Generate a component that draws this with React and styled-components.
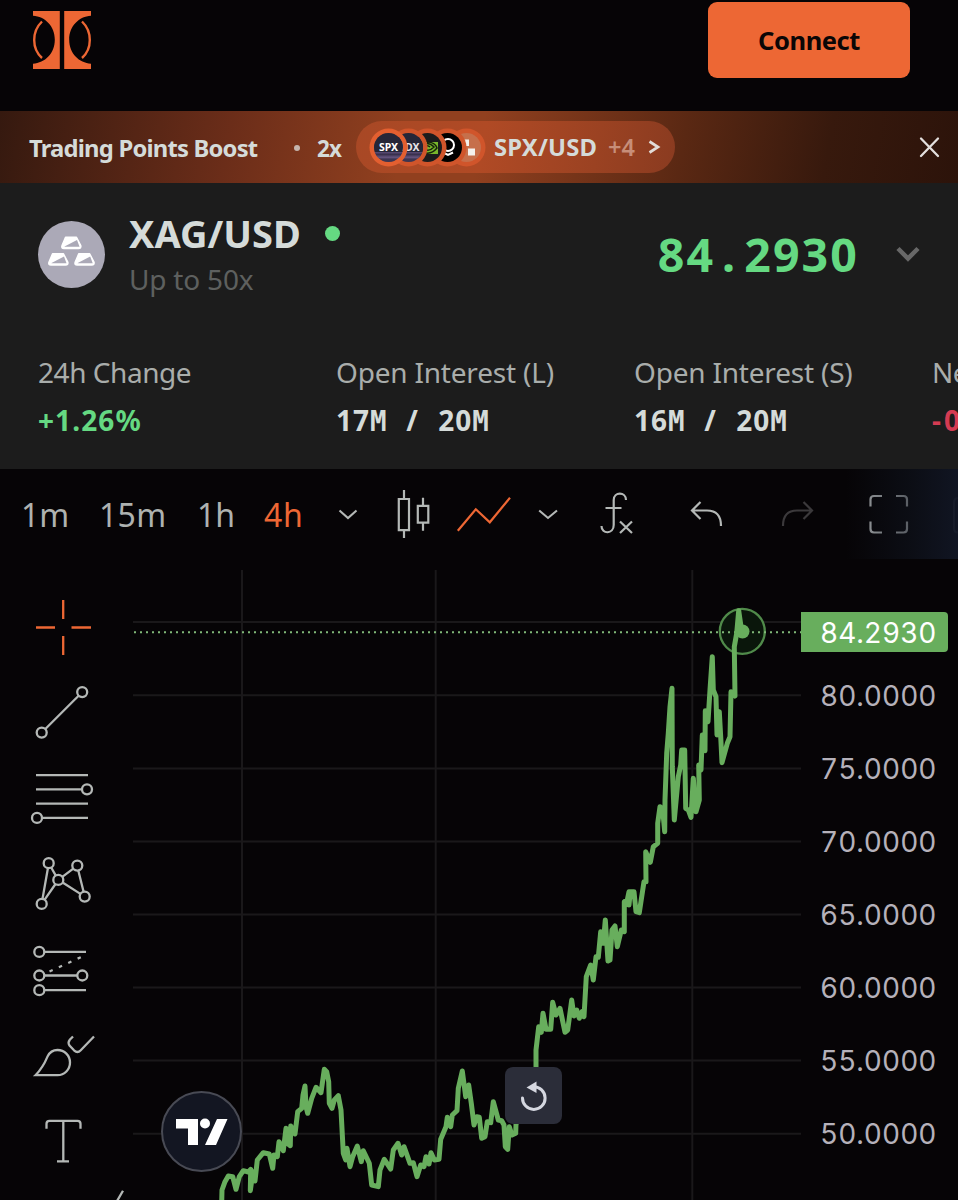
import React from "react";
import styled, { createGlobalStyle } from "styled-components";

const Global = createGlobalStyle`
  * { box-sizing: border-box; }
  body { margin: 0; background: #060406; overflow: hidden; }
`;

const SANS = `"Noto Sans", "Open Sans", sans-serif`;

const Page = styled.div`
  width: 958px;
  height: 1200px;
  overflow: hidden;
  background: #060406;
  font-family: ${SANS};
  color: #d5dbd9;
  display: flex;
  flex-direction: column;
`;

const Text = styled.span`
  font-size: ${(p) => p.$size}px;
  font-weight: ${(p) => p.$weight || 400};
  letter-spacing: ${(p) => p.$track || 0}px;
  color: ${(p) => p.$color || "inherit"};
  line-height: ${(p) => p.$line || 1.2};
  font-family: ${(p) => p.$font || "inherit"};
  white-space: pre;
`;

/* Header */
const Header = styled.header`
  height: 111px;
  flex: none;
  display: flex;
  justify-content: space-between;
  align-items: flex-start;
  padding: 2px 48px 0 33px;
`;
const Logo = styled.svg`
  margin-top: 9px;
  width: 58px;
  height: 58px;
`;
const ConnectButton = styled.button`
  width: 202px;
  height: 76px;
  border: 0;
  border-radius: 9px;
  background: #ed6734;
  color: #0b0606;
  font-family: inherit;
  padding: 0;
`;

/* Promo banner */
const Banner = styled.div`
  height: 72px;
  flex: none;
  display: flex;
  align-items: center;
  padding: 2px 18px 0 29px;
  background: linear-gradient(100deg, #35190f 0%, #6b2d19 24%, #91401f 42%, #91401f 50%, #5a2813 71%, #37190d 86%, #2c130a 100%);
`;
const BannerTitle = styled.div`
  width: 265px;
`;
const Bullet = styled.div`
  width: 6px;
  height: 6px;
  border-radius: 50%;
  background: #c5b5ad;
  margin-right: 17px;
`;
const Multiplier = styled.div`
  width: 39px;
`;
const Pill = styled.div`
  width: 319px;
  height: 52px;
  margin-top: -2px;
  border-radius: 26px;
  display: flex;
  align-items: center;
  padding-left: 18px;
  background: linear-gradient(100deg, #a84825 0%, #b04a25 40%, #9b4222 75%, #8a3b20 100%);
`;
const Coins = styled.div`
  display: flex;
  width: 120px;
  isolation: isolate;
`;
const Coin = styled.div`
  width: 29px;
  height: 29px;
  flex: none;
  margin-right: -9.5px;
  border-radius: 50%;
  position: relative;
  z-index: ${(p) => p.$z};
  background: ${(p) => p.$bg};
  box-shadow: 0 0 0 4.5px ${(p) => p.$ring || "#d0552b"};
  display: flex;
  align-items: center;
  justify-content: center;
  overflow: hidden;
`;
const CoinArt = styled.svg`
  width: 29px;
  height: 29px;
  flex: none;
`;
const PairName = styled.div`
  width: 114px;
`;
const Extra = styled.div`
  width: 39px;
`;
const Spacer = styled.div`
  flex: 1;
`;
const Glyph = styled.svg`
  width: ${(p) => p.$w}px;
  height: ${(p) => p.$h}px;
  flex: none;
  fill: none;
  display: block;
`;

/* Instrument panel */
const Instrument = styled.section`
  height: 286px;
  flex: none;
  background: #1c1c1c;
`;
const InstrumentRow = styled.div`
  height: 144px;
  display: flex;
  padding: 0 37px 0 38px;
`;
const Silver = styled.svg`
  width: 67px;
  height: 67px;
  margin-top: 38px;
  flex: none;
`;
const Names = styled.div`
  margin: 28px 0 0 24px;
  display: flex;
  flex-direction: column;
`;
const NameLine = styled.div`
  display: flex;
  align-items: center;
  height: 46px;
`;
const Live = styled.div`
  width: 15px;
  height: 15px;
  border-radius: 50%;
  background: #65d982;
  margin-left: 24px;
  margin-top: -2px;
`;
const SubLine = styled.div`
  height: 46px;
  display: flex;
  align-items: center;
`;
const PriceBox = styled.div`
  margin: 42px 36px 0 0;
  display: flex;
  align-items: center;
  height: 60px;
`;
const Point = styled.span`
  display: inline-block;
  width: 29px;
  text-align: center;
`;
const Stats = styled.div`
  display: flex;
  padding: 22px 0 0 38px;
  width: 1300px;
`;
const Stat = styled.div`
  width: 298px;
  flex: none;
  display: flex;
  flex-direction: column;
`;
const StatRow = styled.div`
  height: ${(p) => p.$h}px;
  display: flex;
  align-items: center;
`;
const Amount = styled.span`
  font-size: 28px;
  font-weight: 700;
  letter-spacing: 1px;
  word-spacing: 11px;
  line-height: 34px;
  white-space: pre;
`;
const Unit = styled.span`
  font-family: "DejaVu Sans Mono", monospace;
  font-size: 27.5px;
  letter-spacing: 0.4px;
`;

/* Chart toolbar */
const Toolbar = styled.nav`
  height: 90px;
  flex: none;
  position: relative;
  display: flex;
  align-items: center;
  padding-left: 21px;
`;
const Slot = styled.div`
  width: ${(p) => p.$w}px;
  flex: none;
  display: flex;
  align-items: center;
  padding-top: 2px;
`;
const Fade = styled.div`
  position: absolute;
  top: 0;
  right: 0;
  width: 112px;
  height: 90px;
  background: linear-gradient(90deg, rgba(18, 22, 34, 0), rgba(17, 22, 34, 0.55) 60%, rgba(17, 22, 36, 0.95));
`;

/* Chart body */
const Body = styled.main`
  flex: 1;
  display: flex;
  position: relative;
  min-height: 0;
`;
const Tools = styled.aside`
  width: 133px;
  flex: none;
  padding-top: 25px;
  svg { stroke: #b4b8b6; stroke-width: 2.3; overflow: visible; }
`;
const Axis = styled.div`
  width: 157px;
  padding: 27px 0 0 19px;
  color: #b5b1ba;
`;
const AxisLabel = styled.div`
  height: 73.1px;
  display: flex;
  align-items: center;
`;
const AxisText = styled.span`
  font-family: Inter, sans-serif;
  font-size: 28px;
  font-variant-numeric: tabular-nums;
  line-height: 34px;
`;
const PriceTag = styled.div`
  position: absolute;
  left: 801px;
  top: 53px;
  width: 147px;
  height: 40px;
  padding: 1px 0 0 19px;
  display: flex;
  align-items: center;
  border-radius: 0 4px 4px 0;
  background: #68ae5d;
  color: #fff;
`;
const Badge = styled.div`
  position: absolute;
  left: 161px;
  top: 532px;
  width: 81px;
  height: 81px;
  border-radius: 50%;
  border: 2.5px solid #484a54;
  background: #131622;
  display: flex;
  align-items: center;
  justify-content: center;
`;
const Reset = styled.button`
  position: absolute;
  left: 505px;
  top: 508px;
  width: 57px;
  height: 57px;
  border: 0;
  padding: 0;
  border-radius: 8px;
  background: #2b2d39;
  display: flex;
  align-items: center;
  justify-content: center;
`;

const Icon = ({ x, y, w, h, children, ...rest }) => (
  <Glyph $w={w} $h={h} viewBox={`${x} ${y} ${w} ${h}`} {...rest}>{children}</Glyph>
);

const ToolIcon = ({ row, children }) => (
  <Icon x={0} y={584 + row * 85.7} w={133} h={85.7}>{children}</Icon>
);

const trace = (ox, oy, pts) =>
  pts.map(([x, y]) => `${(ox + x / 3).toFixed(1)},${(oy + y / 3).toFixed(1)}`).join(" ");

const PRICE_LINE = [
  trace(200, 1000, [[65,610],[66,570],[75,545],[85,528],[98,530],[108,568],[118,530],[130,512],[145,516],[152,508],[151,572],[159,515],[165,543],[172,480],[190,458],[208,462],[218,505],[222,465],[232,470],[237,425],[250,452],[258,385],[262,430],[271,437],[272,378],[285,402],[293,335],[305,325],[309,285],[315,258],[318,320],[323,340],[335,295],[348,262],[363,278],[373,208],[380,215],[386,245],[388,310],[396,325],[403,300],[415,287],[423,330],[430,460],[437,480],[441,445],[450,500],[458,470],[472,438],[484,485],[490,452],[508,490],[515,555],[535,560],[540,510],[553,478],[572,507],[580,450],[594,430],[605,465],[612,440],[630,490],[640,488],[651,530],[662,495],[672,500],[678,470],[687,492],[693,458],[703,480],[717,478],[722,418],[738,380],[742,352],[752,380],[757,345],[771,332],[775,265],[787,213],[797,290],[806,255],[814,310],[822,375],[830,350],[838,352],[845,415],[855,410],[862,365],[872,368],[880,305],[895,360],[905,362],[912,375],[916,440],[923,448],[928,380],[936,405],[947,400],[948,372],[970,330],[1000,280]]),
  trace(520, 800, [[48,800],[48,750],[56,680],[64,697],[69,640],[78,688],[92,688],[98,607],[108,645],[120,625],[135,697],[143,690],[155,600],[162,648],[170,630],[178,655],[186,635],[192,650],[199,530],[212,495],[220,540],[228,470],[235,472],[242,395],[250,430],[256,360],[264,483],[270,480],[276,390],[285,378],[292,440],[304,390],[313,395],[313,305],[322,300],[327,275],[327,315],[331,275],[342,275],[348,335],[358,338],[372,245],[378,245],[377,155],[391,187],[400,140],[413,130],[413,70],[420,20],[428,30],[434,95]]),
  trace(640, 590, [[75,630],[80,490],[85,430],[90,350],[96,295],[97,530],[103,690],[115,560],[122,525],[125,480],[134,480],[137,655],[145,660],[153,682],[160,565],[168,665],[178,630],[176,525],[183,540],[187,435],[195,482],[196,362],[204,395],[210,300],[217,200],[220,300],[228,320],[231,435],[238,365],[242,440],[246,518],[262,460],[270,440],[273,305],[285,318],[283,170],[290,130],[296,62],[303,110],[310,125]]),
].join(" ");

const GRID_Y = [622, 695.2, 768.4, 841.4, 914.5, 987.6, 1060.6, 1133.7];
const GRID_X = [242, 435.7, 692.3];

const Chart = () => (
  <Icon x={133} y={559} w={668} h={641}>
    <g stroke="#1a181a" strokeWidth="2">
      {GRID_Y.map((y) => <line key={y} x1="133" x2="801" y1={y} y2={y} />)}
      {GRID_X.map((x) => <line key={x} x1={x} x2={x} y1="570" y2="1200" />)}
    </g>
    <circle cx="742.3" cy="631.3" r="22.5" fill="#0a160b" stroke="#508a4a" strokeWidth="2.3" />
    <line x1="134" x2="801" y1="632.2" y2="632.2" stroke="#80b878" strokeWidth="2" strokeDasharray="2 4" />
    <polyline points={PRICE_LINE} stroke="#68ae5d" strokeWidth="5" strokeLinejoin="round" strokeLinecap="round" />
    <circle cx="742.5" cy="631.5" r="7" fill="#68ae5d" />
  </Icon>
);

const OpenInterest = ({ label, used, cap }) => (
  <Stat>
    <StatRow $h={48}><Text $size={28} $track={-0.2} $color="#a9adab">{label}</Text></StatRow>
    <StatRow $h={47}><Amount>{used}<Unit>M</Unit> / {cap}<Unit>M</Unit></Amount></StatRow>
  </Stat>
);

const INDEX_COIN = "linear-gradient(#252638 64%, #5b4b76 66%, #39304d 74%, #66557f 84%, #3d3552 90%)";

export default function App() {
  return (
    <Page>
      <Global />
      <Header>
        <Logo viewBox="33 11 58 58">
          <path fill="#ed6734" d="M33 11H59.8V69H33V63.7C45 63 54.8 53.5 54.8 39.8S45 16.5 33 15.8ZM91 11H64.2V69H91V63.7C79 63 69.2 53.5 69.2 39.8S79 16.5 91 15.8Z" />
          <path fill="none" stroke="#ed6734" strokeWidth="2.4" d="M42 21.5Q34.2 29 34.2 40T42 58M82 21.5Q89.8 29 89.8 40T82 58" />
        </Logo>
        <ConnectButton><Text $size={25.5} $weight={700} $track={-0.45}>Connect</Text></ConnectButton>
      </Header>

      <Banner>
        <BannerTitle><Text $size={23.8} $weight={700} $track={-0.8}>Trading Points Boost</Text></BannerTitle>
        <Bullet />
        <Multiplier><Text $size={22.5} $weight={700} $track={-0.8}>2x</Text></Multiplier>
        <Pill>
          <Coins>
            <Coin $z={5} $bg={INDEX_COIN} $ring="#e35f30">
              <Text $size={10.5} $weight={700} $color="#fff">SPX</Text>
            </Coin>
            <Coin $z={4} $bg={INDEX_COIN}>
              <Text $size={10.5} $weight={700} $color="#e6e2e6">NDX</Text>
            </Coin>
            <Coin $z={3} $bg="#1b1c1d">
              <CoinArt viewBox="0 0 29 29" fill="none">
                <path fill="#78b82b" d="M10 9H25V21H10Z" />
                <path stroke="#17230c" strokeWidth="1.5" d="M7 14Q14 7 21 14Q15 20 10 15Q14 11 17 14M14 9Q22 9 24 15Q19 21 13 20" />
              </CoinArt>
            </Coin>
            <Coin $z={2} $bg="#000">
              <CoinArt viewBox="0 0 29 29" fill="none" stroke="#fff" strokeWidth="2">
                <circle cx="15" cy="12" r="6" />
                <path d="M10 19.5L15 22L20 19.5" />
              </CoinArt>
            </Coin>
            <Coin $z={1} $bg="#c66f4b">
              <CoinArt viewBox="0 0 29 29" fill="#f4f1ed">
                <path d="M11 6.500H17V13H11ZM16 15.500H23V22.500H16Z" />
              </CoinArt>
            </Coin>
          </Coins>
          <PairName><Text $size={23.8} $weight={700} $track={0.2}>SPX/USD</Text></PairName>
          <Extra><Text $size={23.5} $weight={600} $color="#c78e79">+4</Text></Extra>
          <Icon x={646} y={139} w={16} h={20}><path d="M648.5 143.5L657 149L648.5 154.5" stroke="#e2dcd8" strokeWidth="2.7" /></Icon>
        </Pill>
        <Spacer />
        <Icon x={918} y={136} w={22} h={24}><path d="M921 138.500L938 156M938 138.500L921 156" stroke="#e3dfdd" strokeWidth="2.300" strokeLinecap="round" /></Icon>
      </Banner>

      <Instrument>
        <InstrumentRow>
          <Silver viewBox="38 221 67 67">
            <circle cx="71.5" cy="254.5" r="33.5" fill="#aba9b7" />
            {[[61, 236.5], [48, 253], [74.2, 253]].map(([x, y]) => (
              <g key={x} transform={`translate(${x} ${y})`}>
                <path d="M4.5 0.800H15.500L19.800 9Q20.500 12 17.500 12H3Q0 12 1 9Z" fill="#fff" stroke="#fff" strokeWidth="1.400" strokeLinejoin="round" />
                <path d="M3.500 10L16 3.500L18.500 10.300H3.500Z" fill="#aba9b7" />
              </g>
            ))}
          </Silver>
          <Names>
            <NameLine>
              <Text $size={38} $weight={700} $track={0}>XAG/USD</Text>
              <Live />
            </NameLine>
            <SubLine><Text $size={28} $color="#5e605f" $track={-0.2}>Up to 50x</Text></SubLine>
          </Names>
          <Spacer />
          <PriceBox>
            <Text $size={46.5} $weight={700} $track={2.1} $color="#65d982">84<Point>.</Point>2930</Text>
          </PriceBox>
          <Icon x={895} y={183.500} w={26} h={144}><path d="M898 249L908 259L918 249" stroke="#686868" strokeWidth="4.500" /></Icon>
        </InstrumentRow>
        <Stats>
          <Stat>
            <StatRow $h={48}><Text $size={28} $track={-0.45} $color="#a9adab">24h Change</Text></StatRow>
            <StatRow $h={47}><Text $size={28} $weight={700} $track={1.1} $color="#65d982">+1.26%</Text></StatRow>
          </Stat>
          <OpenInterest label="Open Interest (L)" used="17" cap="20" />
          <OpenInterest label="Open Interest (S)" used="16" cap="20" />
          <Stat>
            <StatRow $h={48}><Text $size={28} $track={-0.5} $color="#a9adab">Net Rate</Text></StatRow>
            <StatRow $h={47}><Text $size={28} $weight={700} $track={3} $color="#d43b52">-0.00%</Text></StatRow>
          </Stat>
        </Stats>
      </Instrument>

      <Toolbar>
        <Slot $w={78}><Text $size={32} $color="#aeb2b0">1m</Text></Slot>
        <Slot $w={98}><Text $size={32} $track={0.3} $color="#aeb2b0">15m</Text></Slot>
        <Slot $w={67}><Text $size={32} $color="#aeb2b0">1h</Text></Slot>
        <Slot $w={66}><Text $size={32} $track={0.8} $color="#ed6734">4h</Text></Slot>
        <Icon x={330} y={469} w={60} h={90} stroke="#b4b8b6" strokeWidth="2.1"><path d="M339.5 510.5L348 518L356.5 510.5" /></Icon>
        <Icon x={390} y={469} w={60} h={90} stroke="#b4b8b6" strokeWidth="2.2"><path d="M398.8 499H409V530.2H398.8ZM404 490V499M404 530V538M417.8 505.8H428.3V522.7H417.8ZM423 497.7V505.8M423 522.7V530.7" /></Icon>
        <Icon x={450} y={469} w={80} h={90} stroke="#ed6734" strokeWidth="2.2"><path d="M457.8 530.7L475.8 509.3L489.8 522.3L510 497.7" /></Icon>
        <Icon x={530} y={469} w={60} h={90} stroke="#b4b8b6" strokeWidth="2.1"><path d="M539.2 510.5L548 518L557 510.5" /></Icon>
        <Icon x={590} y={469} w={94} h={90} stroke="#b4b8b6" strokeWidth="2.2"><path d="M626 500C626 491.5 613.7 491.5 613.7 500V525C613.7 534.5 601.5 534.5 601.5 526M605.5 508H621.5M620 521.5L632 533M632 521.5L620 533" /></Icon>
        <Icon x={684} y={469} w={90} h={90} stroke="#b4b8b6" strokeWidth="2.2"><path d="M700.5 502L692 510.5L700.5 519M692 510.5H707Q721 510.5 721 526" /></Icon>
        <Icon x={774} y={469} w={90} h={90} stroke="#3b393b" strokeWidth="2.2"><path d="M803.5 502L812 510.5L803.5 519M812 510.5H797Q783 510.5 783 526" /></Icon>
        <Icon x={864} y={469} w={82} h={90} stroke="#a6a9aa" strokeWidth="2.2"><path d="M882 496H874Q870.5 496 870.5 499.5V506.5M896 496H903.5Q907 496 907 499.5V506.5M870.5 521.5V529Q870.5 532.5 874 532.5H882M907 521.5V529Q907 532.5 903.5 532.5H896" /></Icon>
        <Icon x={946} y={469} w={12} h={90} stroke="#565960" strokeWidth="2"><path d="M958 498Q954 498 954 503V528Q954 532.5 958 532.5" /></Icon>
        <Fade />
      </Toolbar>

      <Body>
        <Tools>
          <ToolIcon row={0}><path stroke="#ed6734" d="M63.2 600V619M63.2 636V655M36 627.5H55M71.5 627.5H91" /></ToolIcon>
          <ToolIcon row={1}><circle cx="41.7" cy="732.3" r="5" /><circle cx="82.2" cy="691.8" r="5" /><path d="M45.3 728.7L78.6 695.4" /></ToolIcon>
          <ToolIcon row={2}><path d="M36 775.5H88M36 789.7H82M36 804H88M42 818.3H88" /><circle cx="87" cy="789.7" r="5" /><circle cx="37" cy="818.3" r="5" /></ToolIcon>
          <ToolIcon row={3}>
            <circle cx="48.7" cy="863.3" r="5" /><circle cx="77.3" cy="865.7" r="5" /><circle cx="58.3" cy="880" r="5" /><circle cx="41.7" cy="904" r="5" /><circle cx="84.7" cy="896.7" r="5" />
            <path d="M47.9 868.3L42.5 899M51.2 867.6L55.8 875.7M62.3 877L73.3 868.7M78.3 870.6L83.6 891.8M62.6 882.6L80.4 894M55.5 884.1L44.5 899.9" />
          </ToolIcon>
          <ToolIcon row={4}><circle cx="39.3" cy="951.7" r="5" /><circle cx="39.3" cy="975.3" r="5" /><circle cx="82.3" cy="975.3" r="5" /><circle cx="39.3" cy="990" r="5" /><path d="M44.3 951.7H86M44.3 975.3H77.3M44.3 990H86" /><path strokeDasharray="3.5 6.8" d="M49.5 971.3L83 956" /></ToolIcon>
          <ToolIcon row={5}><path d="M35.5 1075.7C43 1068 45 1063 47.5 1057C50 1052 53 1050.5 57.5 1050.5C64.5 1050.5 70 1056 70 1063S64.5 1075.7 57.5 1075.7ZM73 1037L69.8 1040.2Q67.500 1043 69.500 1046L74 1050.800Q77.500 1054 80.500 1051L94 1037" /></ToolIcon>
          <ToolIcon row={6}><path d="M46.5 1129V1124Q46.5 1121 49.5 1121H77.5Q80.5 1121 80.5 1124V1129M63.3 1121V1161.5M57 1161.5H69M116 1203L123 1191" /></ToolIcon>
        </Tools>
        <Chart />
        <Axis>
          {["85.0000", "80.0000", "75.0000", "70.0000", "65.0000", "60.0000", "55.0000", "50.0000"].map((v) => (
            <AxisLabel key={v}><AxisText>{v}</AxisText></AxisLabel>
          ))}
        </Axis>
        <PriceTag><AxisText>84.2930</AxisText></PriceTag>
        <Badge>
          <Icon x={175} y={1119} w={53} h={28}>
            <path fill="#fff" d="M176 1120H198V1146H188V1129.5H176ZM217 1120H227.5L216 1146H205Z" />
            <circle cx="205" cy="1124.5" r="5" fill="#fff" />
          </Icon>
        </Badge>
        <Reset>
          <Icon x={517} y={1079} w={33} h={33}>
            <path d="M522.5 1098A11.3 11.3 0 1 0 533.5 1086.8" stroke="#d5d7e0" strokeWidth="3" strokeLinecap="round" />
            <path d="M526.5 1087.5L536.5 1081.5V1093Z" fill="#d5d7e0" />
          </Icon>
        </Reset>
      </Body>
    </Page>
  );
}
